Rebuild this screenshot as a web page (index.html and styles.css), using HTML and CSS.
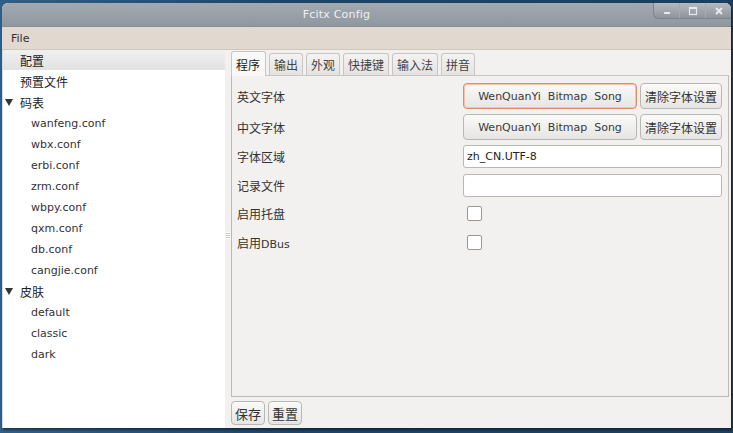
FILE: index.html
```html
<!DOCTYPE html>
<html>
	<head>
		<title>Fcitx Config</title>
		<link rel="stylesheet" href="styles.css">
	</head>
	<body>
		<div class="window">
			<div class="titlebar">
				<span class="title">Fcitx Config</span>
				<div class="winButtons">
					<span class="wb"><svg width="10" height="10"><rect x="2" y="6" width="6" height="2" fill="#e8ebee"/></svg></span>
					<span class="wb"><svg width="10" height="10"><rect x="1.5" y="1.5" width="7" height="7" fill="none" stroke="#e8ebee" stroke-width="1.2"/><rect x="1" y="1" width="8" height="2" fill="#e8ebee"/></svg></span>
					<span class="wb"><svg width="10" height="10"><path d="M2 2 L8 8 M8 2 L2 8" stroke="#e8ebee" stroke-width="2"/></svg></span>
				</div>
			</div>
			<div class="menubar"><span>File</span></div>
			<div class="main">
				<ul class="tree">
					<li class="top selected">配置</li>
					<li class="top">预置文件</li>
					<li class="top parent"><span class="arrow"></span>码表</li>
					<li class="child">wanfeng.conf</li>
					<li class="child">wbx.conf</li>
					<li class="child">erbi.conf</li>
					<li class="child">zrm.conf</li>
					<li class="child">wbpy.conf</li>
					<li class="child">qxm.conf</li>
					<li class="child">db.conf</li>
					<li class="child">cangjie.conf</li>
					<li class="top parent"><span class="arrow"></span>皮肤</li>
					<li class="child">default</li>
					<li class="child">classic</li>
					<li class="child">dark</li>
				</ul>
				<div class="splitter"><span class="grip"></span></div>
				<div class="right">
					<div class="tabs">
						<span class="tab active">程序</span>
						<span class="tab">输出</span>
						<span class="tab">外观</span>
						<span class="tab">快捷键</span>
						<span class="tab">输入法</span>
						<span class="tab">拼音</span>
					</div>
					<div class="panel">
						<div class="row">
							<label>英文字体</label>
							<div class="field">
								<button class="fontBtn focus">WenQuanYi&nbsp; Bitmap&nbsp; Song</button>
								<button class="clearBtn">清除字体设置</button>
							</div>
						</div>
						<div class="row">
							<label>中文字体</label>
							<div class="field">
								<button class="fontBtn">WenQuanYi&nbsp; Bitmap&nbsp; Song</button>
								<button class="clearBtn">清除字体设置</button>
							</div>
						</div>
						<div class="row short">
							<label>字体区域</label>
							<div class="field"><input class="text" type="text" value="zh_CN.UTF-8"></div>
						</div>
						<div class="row short second">
							<label>记录文件</label>
							<div class="field"><input class="text" type="text" value=""></div>
						</div>
						<div class="row check first">
							<label>启用托盘</label>
							<div class="field"><span class="box"></span></div>
						</div>
						<div class="row check">
							<label>启用<span class="latin">DBus</span></label>
							<div class="field"><span class="box"></span></div>
						</div>
					</div>
					<div class="bottom">
						<button class="btn">保存</button>
						<button class="btn">重置</button>
					</div>
				</div>
			</div>
		</div>
	</body>
</html>
```

FILE: styles.css
```css
html, body{
	margin: 0;
	padding: 0;
}
body{
	width: 733px;
	height: 433px;
	overflow: hidden;
	background: linear-gradient(90deg, #2f5f86 0%, #1d4467 40%, #1c3e5e 100%);
	font-family: "DejaVu Sans", "Noto Sans CJK SC", sans-serif;
	font-size: 11px;
	color: #2e2e2e;
}
.window{
	margin: 3px 0 0 2px;
	width: 729px;
	height: 425px;
	display: flex;
	flex-direction: column;
	background: #f2f1ef;
	border-radius: 6px 6px 0 0;
	overflow: hidden;
	box-shadow: 1px 2px 2px rgba(0,0,0,0.4);
}
.titlebar{
	height: 23px;
	flex: none;
	background: linear-gradient(#a3a9b1, #8f979f);
	display: flex;
	align-items: center;
	justify-content: center;
	position: relative;
	border-bottom: 1px solid #868d95;
}
.title{
	color: #eef0f2;
	font-size: 11px;
	letter-spacing: 0.2px;
	margin-left: -60px;
}
.winButtons{
	position: absolute;
	right: 0;
	top: 0;
	height: 15px;
	display: flex;
	background: linear-gradient(#b4b9bf, #8e959c);
	border-radius: 0 0 0 6px;
	border: 1px solid #7c838a;
	border-top: none;
	border-right: none;
}
.wb{
	width: 25px;
	display: flex;
	align-items: center;
	justify-content: center;
	border-left: 1px solid #a4aab0;
}
.wb:first-child{
	border-left: none;
}
.menubar{
	height: 22px;
	flex: none;
	background: #e1d9d0;
	border-bottom: 1px solid #cfc8bf;
	display: flex;
	align-items: center;
	padding-left: 9px;
	font-size: 11px;
	color: #333;
}
.main{
	flex: 1;
	display: flex;
	min-height: 0;
}
.tree{
	list-style: none;
	margin: 0;
	padding: 0;
	width: 222px;
	background: #fff;
	flex: none;
	border-left: 1px solid #d8d8d8;
}
.tree li{
	height: 21px;
	line-height: 21px;
	white-space: nowrap;
	display: flex;
	align-items: center;
}
.tree .top{
	padding-left: 17px;
	font-family: "Noto Sans CJK SC", sans-serif;
	font-size: 12px;
	color: #222;
}
.tree .parent{
	padding-left: 2px;
}
.tree .child{
	padding-left: 28px;
	color: #333;
}
.tree .selected{
	height: 20px;
	margin-bottom: 1px;
	background: linear-gradient(#f0f0f0, #e2e2e2);
}
.arrow{
	width: 0;
	height: 0;
	border-left: 4px solid transparent;
	border-right: 4px solid transparent;
	border-top: 7px solid #333;
	margin-right: 7px;
}
.splitter{
	width: 6px;
	flex: none;
	display: flex;
	align-items: center;
	justify-content: center;
	background: #f2f1ef;
}
.grip{
	width: 4px;
	height: 7px;
	background: repeating-linear-gradient(#fff 0 1px, #c9c6c2 1px 2px);
	margin-top: -8px;
}
.right{
	flex: 1;
	display: flex;
	flex-direction: column;
	padding: 0 2px 0 0;
}
.tabs{
	display: flex;
	align-items: flex-end;
	height: 25px;
	margin-top: 0;
	gap: 3px;
}
.tab{
	height: 21px;
	padding: 0 4px;
	display: flex;
	align-items: center;
	font-family: "Noto Sans CJK SC", sans-serif;
	font-size: 12px;
	color: #444;
	background: linear-gradient(#f4f3f2, #e4e3e1);
	border: 1px solid #c8c6c3;
	border-bottom: none;
	border-radius: 3px 3px 0 0;
}
.tab.active{
	height: 24px;
	padding: 0 5px 0 4px;
	background: #f8f8f7;
	color: #222;
	margin-bottom: -1px;
	position: relative;
	z-index: 1;
}
.panel{
	height: 322px;
	border: 1px solid #bdbab6;
	border-top-color: #c8c6c3;
	padding: 7px 5px 0 5px;
	box-sizing: border-box;
	display: flex;
	flex-direction: column;
	gap: 5px;
}
.row{
	display: flex;
	align-items: center;
	height: 26px;
}
.row.short{
	height: 23px;
}
.row.second{
	margin-top: 1px;
}
.row.check{
	height: 24px;
}
.row.check.first{
	margin-top: -1px;
}
.row label{
	width: 226px;
	flex: none;
	font-family: "Noto Sans CJK SC", sans-serif;
	font-size: 12px;
	color: #333;
}
.latin{
	font-family: "DejaVu Sans", sans-serif;
	font-size: 11px;
}
.field{
	flex: 1;
	display: flex;
	gap: 3px;
}
button{
	font-family: "Noto Sans CJK SC", sans-serif;
	color: #333;
	background: linear-gradient(#fafafa, #e6e5e3);
	border: 1px solid #b9b7b4;
	border-radius: 4px;
	padding: 0;
	margin: 0;
}
.fontBtn{
	width: 174px;
	height: 26px;
	font-family: "DejaVu Sans", sans-serif;
	font-size: 11px;
	color: #3a3a3a;
}
.fontBtn.focus{
	border-color: #e08a68;
	box-shadow: 0 0 0 1px #f3c4b0 inset;
}
.clearBtn{
	width: 82px;
	height: 26px;
	font-size: 12px;
}
.text{
	width: 259px;
	height: 23px;
	box-sizing: border-box;
	border: 1px solid #bab7b3;
	border-radius: 3px;
	background: #fff;
	padding: 0 3px;
	font-family: "DejaVu Sans", sans-serif;
	font-size: 11px;
	color: #222;
	margin: 0;
}
.box{
	width: 13px;
	height: 13px;
	margin-left: 4px;
	border: 1px solid #9a9895;
	border-radius: 2px;
	background: #fff;
}
.bottom{
	display: flex;
	gap: 3px;
	padding-top: 4px;
}
.btn{
	width: 34px;
	height: 24px;
	font-size: 13px;
}
```
